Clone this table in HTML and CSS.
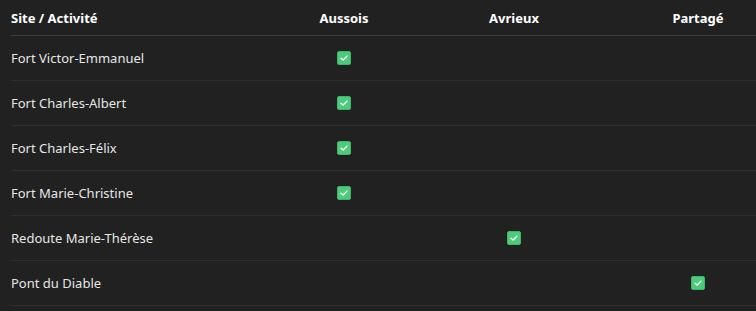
FILE: index.html
```html
<!DOCTYPE html>
<html lang="fr">
<head>
<meta charset="utf-8">
<link rel="stylesheet" href="styles.css">
</head>
<body>
<div class="table">
  <div class="row head">
    <div class="cell name">Site / Activité</div>
    <div class="cell c">Aussois</div>
    <div class="cell c">Avrieux</div>
    <div class="cell c">Partagé</div>
  </div>
  <div class="row">
    <div class="cell name">Fort Victor-Emmanuel</div>
    <div class="cell c"><span class="chk"><svg viewBox="0 0 14 14"><path d="M3.5 7.2 L6 9.4 L10.5 4.8"/></svg></span></div>
    <div class="cell c"></div>
    <div class="cell c"></div>
  </div>
  <div class="row">
    <div class="cell name">Fort Charles-Albert</div>
    <div class="cell c"><span class="chk"><svg viewBox="0 0 14 14"><path d="M3.5 7.2 L6 9.4 L10.5 4.8"/></svg></span></div>
    <div class="cell c"></div>
    <div class="cell c"></div>
  </div>
  <div class="row">
    <div class="cell name">Fort Charles-Félix</div>
    <div class="cell c"><span class="chk"><svg viewBox="0 0 14 14"><path d="M3.5 7.2 L6 9.4 L10.5 4.8"/></svg></span></div>
    <div class="cell c"></div>
    <div class="cell c"></div>
  </div>
  <div class="row">
    <div class="cell name">Fort Marie-Christine</div>
    <div class="cell c"><span class="chk"><svg viewBox="0 0 14 14"><path d="M3.5 7.2 L6 9.4 L10.5 4.8"/></svg></span></div>
    <div class="cell c"></div>
    <div class="cell c"></div>
  </div>
  <div class="row">
    <div class="cell name">Redoute Marie-Thérèse</div>
    <div class="cell c"></div>
    <div class="cell c"><span class="chk"><svg viewBox="0 0 14 14"><path d="M3.5 7.2 L6 9.4 L10.5 4.8"/></svg></span></div>
    <div class="cell c"></div>
  </div>
  <div class="row">
    <div class="cell name">Pont du Diable</div>
    <div class="cell c"></div>
    <div class="cell c"></div>
    <div class="cell c"><span class="chk"><svg viewBox="0 0 14 14"><path d="M3.5 7.2 L6 9.4 L10.5 4.8"/></svg></span></div>
  </div>
</div>
</body>
</html>
```
FILE: styles.css
```css
html, body {
  margin: 0;
  padding: 0;
  background: #212121;
}
body {
  font-family: "Noto Sans", "Open Sans", sans-serif;
  font-size: 13px;
  color: #e6e6e6;
}
.table {
  margin-left: 11px;
  width: 745px;
}
.row {
  display: grid;
  grid-template-columns: 289px 88px 252px 116px;
  height: 44px;
  align-items: center;
  border-bottom: 1px solid #2e2e2e;
}
.row.head {
  height: 35px;
  border-bottom: 1px solid #3d3d3d;
  font-weight: 700;
  color: #ffffff;
}
.cell {
  white-space: nowrap;
  display: flex;
  align-items: center;
}
.cell.c {
  justify-content: center;
}
.chk {
  width: 14px;
  height: 14px;
  box-sizing: border-box;
  background: #4ccb7a;
  border: 1px solid #3fb56b;
  border-radius: 2px;
  display: flex;
}
.chk svg {
  width: 12px;
  height: 12px;
  fill: none;
  stroke: #ffffff;
  stroke-width: 1.6;
  stroke-linecap: round;
  stroke-linejoin: round;
}
```
